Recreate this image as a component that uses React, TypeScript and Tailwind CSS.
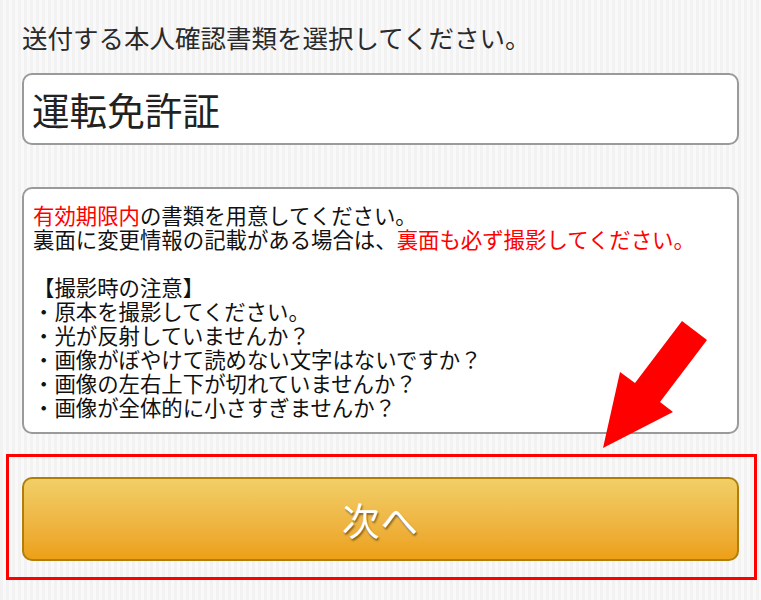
import React from "react";

const jp = { fontFamily: '"Noto Sans CJK JP", "Noto Sans", sans-serif' };

export default function App() {
  return (
    <div
      className="relative w-[761px] h-[600px] overflow-hidden bg-[repeating-linear-gradient(90deg,#f2f2f2_0px,#f2f2f2_3px,#f9f9f9_3px,#f9f9f9_6px)] text-[#222]"
      style={jp}
    >
      <div className="flex flex-col pl-[22px] pr-[22px]">
        <p className="pt-[19px] text-[25.5px] leading-[36px] text-[#2a2a2a] whitespace-nowrap">
          送付する本人確認書類を選択してください。
        </p>

        <div className="mt-[18px] h-[72px] w-[717px] flex items-center bg-white border-2 border-[#9a9a9a] rounded-[10px] pl-[8px] text-[37.6px] text-[#222] leading-none">
          運転免許証
        </div>

        <div className="mt-[42px] h-[247px] w-[717px] bg-white border-2 border-[#9a9a9a] rounded-[10px] pl-[9px] pt-[14px] text-[21.4px] leading-[24px] text-[#111] whitespace-nowrap">
          <p>
            <span className="text-[#ff0000]">有効期限内</span>の書類を用意してください。
          </p>
          <p>
            裏面に変更情報の記載がある場合は、
            <span className="text-[#ff0000]">裏面も必ず撮影してください。</span>
          </p>
          <p>&nbsp;</p>
          <p>【撮影時の注意】</p>
          <p>・原本を撮影してください。</p>
          <p>・光が反射していませんか？</p>
          <p>・画像がぼやけて読めない文字はないですか？</p>
          <p>・画像の左右上下が切れていませんか？</p>
          <p>・画像が全体的に小さすぎませんか？</p>
        </div>

        <div className="mt-[20px] ml-[-16px] mr-[-18px] border-[3px] border-[#ff0000] pl-[13px] pr-[15px] pt-[20px] pb-[16px]">
          <div className="h-[84px] flex items-center justify-center rounded-[10px] border-2 border-[#b07f0a] bg-gradient-to-b from-[#f1cf66] to-[#eca014]">
            <span className="text-[37.5px] leading-none text-white [text-shadow:1px_2px_2px_rgba(0,0,0,0.45)] tracking-[1px]">
              次へ
            </span>
          </div>
        </div>
      </div>

      <svg
        className="absolute left-0 top-0 pointer-events-none"
        width="761"
        height="600"
        viewBox="0 0 761 600"
      >
        <polygon
          points="682,321 707,340 660,402 673,412 603,448 620,372 635,383"
          fill="#ff0000"
        />
      </svg>
    </div>
  );
}
